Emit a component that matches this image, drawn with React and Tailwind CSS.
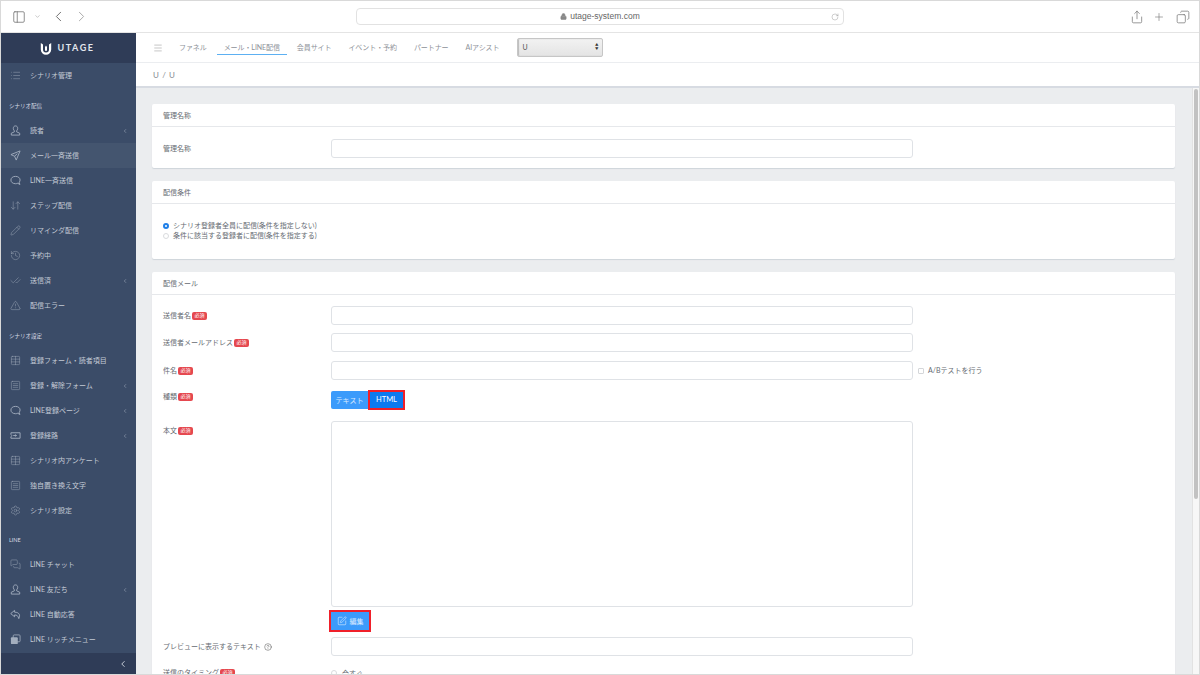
import React from "react";
import {
  PanelLeft,
  ChevronDown,
  ChevronLeft,
  ChevronRight,
  Share,
  Plus,
  Copy,
  RotateCw,
  Lock,
  Menu,
  List,
  ArrowDownUp,
  Pencil,
  History,
  CheckCheck,
  TriangleAlert,
  Table,
  SquareMenu,
  Settings,
  MessagesSquare,
  SquarePen,
  CircleHelp,
} from "lucide-react";

const Bust = (props) => (
  <svg viewBox="0 0 12 12" fill="none" stroke="currentColor" strokeWidth={0.9} {...props}>
    <path d="M6 1 C4.4 1 3.6 2.2 3.6 3.7 C3.6 5 4.2 5.9 4.8 6.4 V7.4 L1.4 9 V11 H10.6 V9 L7.2 7.4 V6.4 C7.8 5.9 8.4 5 8.4 3.7 C8.4 2.2 7.6 1 6 1 Z" />
  </svg>
);

const Plane = (props) => (
  <svg viewBox="0 0 12 12" fill="none" stroke="currentColor" strokeWidth={0.9} {...props}>
    <path d="M11 1 L1 5 L5 6.8 L6.8 11 Z M5 6.8 L8 4" />
  </svg>
);

const Bubble = (props) => (
  <svg viewBox="0 0 12 12" fill="none" stroke="currentColor" strokeWidth={0.9} {...props}>
    <path d="M6 1.5 C3 1.5 1 3.2 1 5.5 C1 7.8 3 9.5 6 9.5 C7 9.5 7.8 9.3 8.5 9 L10.8 10.4 L10 7.9 C10.6 7.2 11 6.4 11 5.5 C11 3.2 9 1.5 6 1.5 Z" />
  </svg>
);

const Route = (props) => (
  <svg viewBox="0 0 12 12" fill="none" stroke="currentColor" strokeWidth={0.9} {...props}>
    <path d="M1 3 H11 V9 H1 V7.2 L2.2 6 L1 4.8 Z M3.5 6 H7 M5.8 4.8 L7 6 L5.8 7.2" />
  </svg>
);

const ReplyArrow = (props) => (
  <svg viewBox="0 0 12 12" fill="none" stroke="currentColor" strokeWidth={0.9} {...props}>
    <path d="M5 1.5 L0.8 5 L5 8.5 V6.5 C7.5 6.5 8.8 7.3 9.6 10.5 C11.4 7 10.5 3.5 5 3.5 Z" />
  </svg>
);

const RichMenu = (props) => (
  <svg viewBox="0 0 12 12" {...props}>
    <rect x="3.5" y="1" width="7.5" height="7.5" rx="1" fill="none" stroke="currentColor" strokeWidth={0.9} />
    <rect x="1" y="3.5" width="7.5" height="7.5" rx="1" fill="currentColor" />
  </svg>
);

const sidebar = [
  { label: "シナリオ管理", icon: List },
  { section: "シナリオ配信", cls: "h-[30px] pt-[6px]" },
  { label: "読者", icon: Bust, arrow: true },
  { label: "メール一斉送信", icon: Plane, active: true },
  { label: "LINE一斉送信", icon: Bubble },
  { label: "ステップ配信", icon: ArrowDownUp },
  { label: "リマインダ配信", icon: Pencil },
  { label: "予約中", icon: History },
  { label: "送信済", icon: CheckCheck, arrow: true },
  { label: "配信エラー", icon: TriangleAlert },
  { section: "シナリオ設定", cls: "h-[30px] pt-[6px]" },
  { label: "登録フォーム・読者項目", icon: Table },
  { label: "登録・解除フォーム", icon: SquareMenu, arrow: true },
  { label: "LINE登録ページ", icon: Bubble, arrow: true },
  { label: "登録経路", icon: Route, arrow: true },
  { label: "シナリオ内アンケート", icon: Table },
  { label: "独自置き換え文字", icon: SquareMenu },
  { label: "シナリオ設定", icon: Settings },
  { section: "LINE", cls: "h-[29px] pt-[6px]" },
  { label: "LINE チャット", icon: MessagesSquare },
  { label: "LINE 友だち", icon: Bust, arrow: true },
  { label: "LINE 自動応答", icon: ReplyArrow },
  { label: "LINE リッチメニュー", icon: RichMenu },
];

const tabs = ["ファネル", "メール・LINE配信", "会員サイト", "イベント・予約", "パートナー", "AIアシスト"];

const Badge = () => (
  <span className="ml-[1px] inline-flex h-[8px] w-[15px] items-center justify-center rounded-[2px] bg-[#e5484f] text-[5px] leading-none text-white">
    必須
  </span>
);

const Input = ({ className = "" }) => (
  <div className={`h-[19px] w-[582px] rounded-[3px] border border-[#dfe2e6] bg-white ${className}`} />
);

const Label = ({ children, required, className = "pt-[5px]" }) => (
  <div className={`flex w-[179px] shrink-0 items-center self-start pl-[11px] text-[#666b72] ${className}`}>
    <span className="leading-[9px]">{children}</span>
    {required && <Badge />}
  </div>
);

const Card = ({ title, className = "", children }) => (
  <div className={`rounded-[2px] bg-white shadow-[0_1px_1px_#cfd4da] ${className}`}>
    <div className="flex h-[23px] items-center border-b border-[#e6e8eb] pl-[11px] text-[#666b72]">{title}</div>
    {children}
  </div>
);

export default function App() {
  return (
    <div className="flex h-[675px] w-[1200px] flex-col overflow-hidden border border-[#d9d9d9] bg-white font-['Lato','Noto_Sans_CJK_JP',sans-serif] text-[7px]">
      {/* browser bar */}
      <div className="flex h-[32px] shrink-0 items-center border-b border-[#e4e4e4] bg-white text-[#6e6e6e]">
        <div className="flex w-[355px] items-center pl-[11px]">
          <PanelLeft size={14} strokeWidth={1.3} />
          <ChevronDown size={7} strokeWidth={1.5} className="ml-[8px] text-[#888]" />
          <ChevronLeft size={17} strokeWidth={1.4} className="ml-[9px]" />
          <ChevronRight size={17} strokeWidth={1.4} className="ml-[6px] text-[#aaa]" />
        </div>
        <div className="relative flex h-[17px] w-[488px] items-center justify-center rounded-[4px] border border-[#e2e2e2] text-[8.5px] text-[#666]">
          <Lock size={7} fill="currentColor" className="mr-[3px] text-[#888]" />
          <span className="font-['Liberation_Sans',sans-serif]">utage-system.com</span>
          <RotateCw size={8} strokeWidth={1.2} className="absolute right-[4px] text-[#888]" />
        </div>
        <div className="ml-auto flex items-center pr-[9px]">
          <Share size={14} strokeWidth={1.2} />
          <Plus size={12} strokeWidth={1.2} className="ml-[9px]" />
          <Copy size={14} strokeWidth={1.2} className="ml-[11px] -scale-x-100" />
        </div>
      </div>

      <div className="flex min-h-0 flex-1">
        {/* sidebar */}
        <aside className="flex w-[135px] shrink-0 flex-col bg-[#3b4c68] text-[#c3cad5]">
          <div className="flex h-[30px] shrink-0 items-center justify-center bg-[#2f3c57] pr-[2px]">
            <svg width="12" height="13" viewBox="0 0 12 13" className="mr-[5px]">
              <path d="M0.8 1 V7.5 A5.2 5.2 0 0 0 11.2 7.5 V1 L9 2.6 V7.5 A3 3 0 0 1 3 7.5 V2.6 Z" fill="#fff" />
              <path d="M6 3.5 L7 5 V8 A1 1 0 0 1 5 8 V5 Z" fill="#fff" />
            </svg>
            <span className="text-[9px] font-bold tracking-[1.6px] text-[#e4e8ee]">UTAGE</span>
          </div>
          <nav className="min-h-0 flex-1 overflow-hidden">
            {sidebar.map((item) =>
              item.section ? (
                <div key={item.section + item.cls} className={`flex items-center pl-[8px] text-[5.5px] text-[#d5dae2] ${item.cls}`}>
                  {item.section}
                </div>
              ) : (
                <div
                  key={item.label}
                  className={`flex h-[25px] items-center pl-[9px] ${item.active ? "bg-[#44556f]" : ""}`}
                >
                  <item.icon width={11} height={11} strokeWidth={1} className="mr-[9px] shrink-0 text-[#a3aebe]" />
                  <span className="whitespace-nowrap">{item.label}</span>
                  {item.arrow && <ChevronLeft size={6} strokeWidth={2} className="ml-auto mr-[8px] text-[#a9b3c2]" />}
                </div>
              )
            )}
          </nav>
          <div className="flex h-[21px] shrink-0 items-center justify-end bg-[#2f3c57] pr-[8px]">
            <ChevronLeft size={10} strokeWidth={2.4} className="text-[#c3cad5]" />
          </div>
        </aside>

        {/* main */}
        <main className="flex min-w-0 flex-1 flex-col">
          <div className="flex h-[30px] shrink-0 items-center border-b border-[#ebedf0] pl-[17px] text-[#8d9198]">
            <Menu size={10} strokeWidth={1} className="mr-[9px] text-[#777]" />
            <div className="flex h-full items-center gap-[3px] tracking-[-0.08px]">
              {tabs.map((t, i) => (
                <div
                  key={t}
                  className={`flex h-[15px] items-center whitespace-nowrap px-[7px] ${i === 1 ? "border-b border-[#5db0f2]" : ""}`}
                >
                  {t}
                </div>
              ))}
            </div>
            <div className="ml-[11px] flex h-[19px] w-[86px] items-center justify-between rounded-[2px] border border-[#c6c6c6] bg-gradient-to-b from-[#f2f2f2] to-[#e4e4e4] px-[4px] text-[#555] shadow-[inset_1px_0_1px_#bbb]">
              <span>U</span>
              <span className="flex flex-col text-[3.5px] leading-[3.5px] text-[#333]">
                <span>▲</span>
                <span>▼</span>
              </span>
            </div>
          </div>
          <div className="flex h-[25px] shrink-0 items-center border-b-2 border-[#d7dbe2] pl-[17px] text-[8px] tracking-[0.6px] text-[#868b92]">
            U / U
          </div>

          <div className="flex min-h-0 flex-1 overflow-hidden bg-[#ebedef]">
            <div className="flex min-w-0 flex-1 flex-col gap-[12px] pl-[16px] pr-[17px] pt-[16px]">
              <Card title="管理名称" className="shrink-0">
                <div className="flex h-[41px] items-start pt-[12px]">
                  <Label>管理名称</Label>
                  <Input />
                </div>
              </Card>

              <Card title="配信条件" className="mt-[1px] shrink-0">
                <div className="flex h-[55px] flex-col justify-center pb-[2px] pl-[11px] text-[#666b72]">
                  <div className="flex h-[10px] items-center">
                    <span className="mr-[4px] h-[6px] w-[6px] rounded-full border-[2px] border-[#1f7fe8] bg-white" />
                    シナリオ登録者全員に配信(条件を指定しない)
                  </div>
                  <div className="flex h-[10px] items-center">
                    <span className="mr-[4px] h-[6px] w-[6px] rounded-full border border-[#d9dbde] bg-white" />
                    条件に該当する登録者に配信(条件を指定する)
                  </div>
                </div>
              </Card>

              <Card title="配信メール" className="mt-[1px] shrink-0">
                <div className="pt-[11px]">
                  <div className="flex">
                    <Label required>送信者名</Label>
                    <Input />
                  </div>
                  <div className="mt-[8px] flex">
                    <Label required>送信者メールアドレス</Label>
                    <Input />
                  </div>
                  <div className="mt-[9px] flex">
                    <Label required>件名</Label>
                    <Input />
                    <div className="ml-[5px] flex h-[19px] items-center text-[#666b72]">
                      <span className="mr-[4px] h-[6px] w-[6px] rounded-[1px] border border-[#d4d6d9]" />
                      A/Bテストを行う
                    </div>
                  </div>
                  <div className="mt-[10px] flex">
                    <Label required className="pt-[2px]">種類</Label>
                    <div className="flex h-[20px] items-center">
                      <div className="flex h-[18px] w-[37px] items-center justify-center rounded-l-[2px] bg-[#3c9bfb] text-white/80">
                        テキスト
                      </div>
                      <div className="flex h-[20px] w-[37px] items-center justify-center border-2 border-[#f0202a] bg-[#0c7af0] text-[7.5px] text-white">
                        HTML
                      </div>
                    </div>
                  </div>
                  <div className="mt-[11px] flex">
                    <Label required>本文</Label>
                    <div className="h-[186px] w-[582px] rounded-[3px] border border-[#dfe2e6] bg-white" />
                  </div>
                  <div className="mt-[3px] flex">
                    <div className="w-[177px] shrink-0" />
                    <div className="flex h-[22px] w-[42px] items-center justify-center border-2 border-[#f0202a] bg-[#3c9bfb] text-[#dcecff]">
                      <SquarePen size={10} strokeWidth={1.2} className="mr-[3px] text-white" />
                      編集
                    </div>
                  </div>
                  <div className="mt-[5px] flex">
                    <Label>
                      <span className="inline-flex items-center">
                        プレビューに表示するテキスト
                        <CircleHelp size={8} strokeWidth={1.4} className="ml-[3px] text-[#444]" />
                      </span>
                    </Label>
                    <Input />
                  </div>
                  <div className="mt-[12px] flex">
                    <Label required className="pt-0">送信のタイミング</Label>
                    <div className="flex items-center text-[#666b72]">
                      <span className="mr-[5px] h-[6px] w-[6px] rounded-full border border-[#d9dbde]" />
                      今すぐ
                    </div>
                  </div>
                </div>
              </Card>
            </div>
            {/* scrollbar */}
            <div className="w-[7px] shrink-0 border-l border-[#e2e2e2] bg-[#f7f7f7] pl-[1px] pr-[1px] pt-[1px]">
              <div className="h-[410px] rounded-[3px] bg-[#c2c2c2]" />
            </div>
          </div>
        </main>
      </div>
    </div>
  );
}
